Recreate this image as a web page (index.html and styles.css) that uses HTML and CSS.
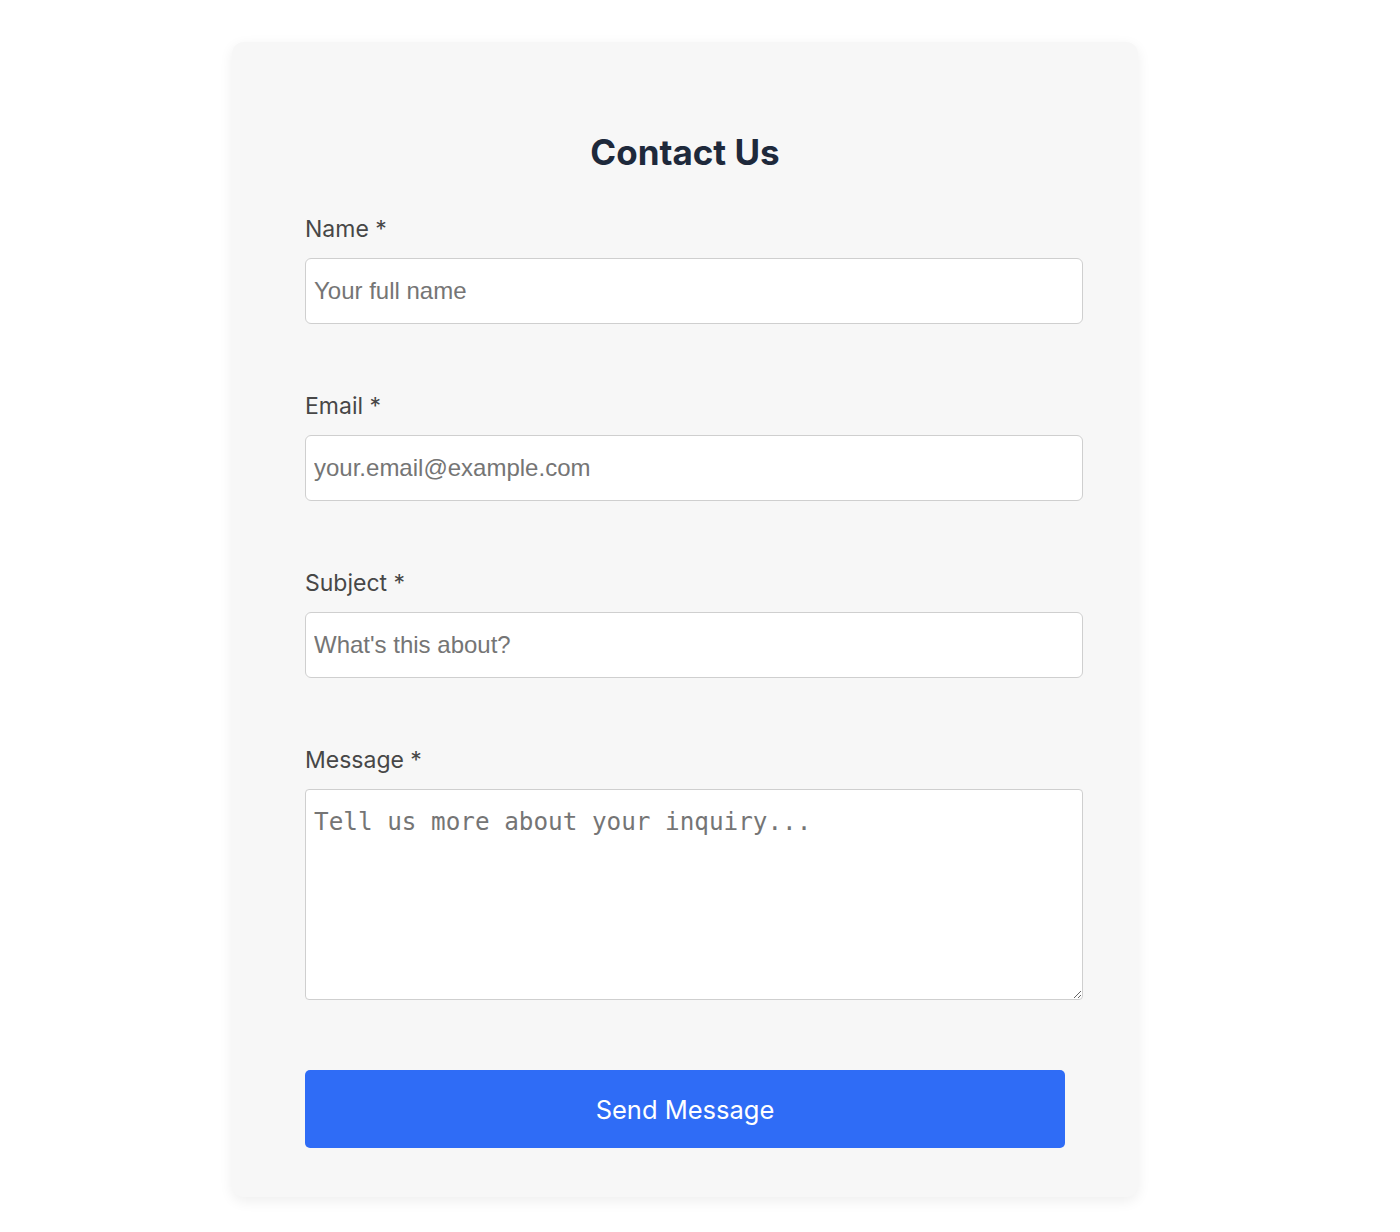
FILE: index.html
```html
<!DOCTYPE html>
<html lang="en">
<head>
    <meta charset="UTF-8">
    <meta name="viewport" content="width=device-width, initial-scale=1.0">
    <title>Contact Us</title>
    <link rel="stylesheet" href="styles.css">
</head>
<body>
    <div class="container">
        <h1>Contact Us</h1>

        <form class="contact-form" onsubmit="return false;">
            <div class="field">
                <label for="name">Name *</label>
                <input type="text" id="name" placeholder="Your full name">
            </div>

            <div class="field">
                <label for="email">Email *</label>
                <input type="email" id="email" placeholder="your.email@example.com">
            </div>

            <div class="field">
                <label for="subject">Subject *</label>
                <input type="text" id="subject" placeholder="What's this about?">
            </div>

            <div class="field">
                <label for="message">Message *</label>
                <textarea id="message" placeholder="Tell us more about your inquiry..."></textarea>
            </div>

            <button type="submit" class="button">Send Message</button>
        </form>
    </div>
</body>
</html>
```

FILE: styles.css
```css
body {
    font-family: Inter, "Noto Sans", sans-serif;
    margin: 0;
    padding: 42px 30px 34px 0;
    background-color: #ffffff;
}
.container {
    width: 760px;
    margin: 0 auto;
    background: #f7f7f7;
    padding: 90px 73px 49px;
    border-radius: 12px;
    box-shadow: 0 4px 14px rgba(0,0,0,0.07);
}
h1 {
    margin: 0 0 45px;
    color: #1e293b;
    text-align: center;
    font-size: 35px;
    line-height: 40px;
    font-weight: 700;
}
.field {
    margin-bottom: 70px;
}
.field:last-of-type {
    margin-bottom: 70px;
}
.field label {
    display: block;
    margin-bottom: 17px;
    font-size: 23px;
    line-height: 24px;
    color: #474747;
}
.field input,
.field textarea {
    display: block;
    width: 100%;
    margin: 0;
    padding: 18px 8px;
    border: 1px solid #cfcfcf;
    border-radius: 6px;
    background: #fff;
    font-family: "Liberation Sans", Arial, sans-serif;
    font-size: 24px;
    line-height: 28px;
    color: #333;
}
.field textarea {
    height: 173px;
    padding: 18px 8px;
    font-family: "DejaVu Sans Mono", "Liberation Mono", monospace;
    font-size: 24.3px;
    border-radius: 4px;
    resize: vertical;
}
.field input::placeholder,
.field textarea::placeholder {
    color: #757575;
}
.button {
    display: block;
    width: 760px;
    height: 78px;
    background-color: #2f6cf6;
    color: white;
    border: none;
    border-radius: 5px;
    font-family: Inter, "Noto Sans", sans-serif;
    font-size: 25.5px;
    cursor: pointer;
}
.button:hover {
    background-color: #2563eb;
}
```
